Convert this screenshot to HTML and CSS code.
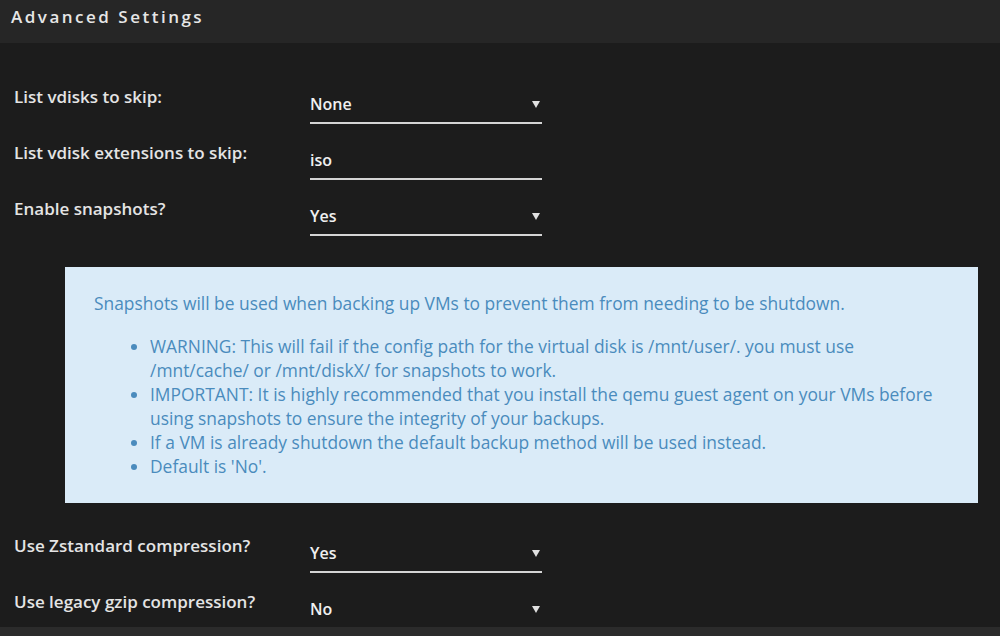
FILE: index.html
```html
<!DOCTYPE html>
<html lang="en">
<head>
    <meta charset="UTF-8">
    <meta name="viewport" content="width=device-width, initial-scale=1.0">
    <title>Advanced Settings</title>
    <link rel="stylesheet" href="styles.css">
</head>
<body>
    <div class="title-bar">Advanced Settings</div>

    <div class="settings">
        <div class="row">
            <div class="label">List vdisks to skip:</div>
            <div class="control select">
                <span>None</span>
                <svg class="caret" width="8" height="7" viewBox="0 0 8 7"><polygon points="0,0 8,0 4,7"/></svg>
            </div>
        </div>
        <div class="row">
            <div class="label">List vdisk extensions to skip:</div>
            <div class="control"><span>iso</span></div>
        </div>
        <div class="row">
            <div class="label">Enable snapshots?</div>
            <div class="control select">
                <span>Yes</span>
                <svg class="caret" width="8" height="7" viewBox="0 0 8 7"><polygon points="0,0 8,0 4,7"/></svg>
            </div>
        </div>

        <div class="info">
            <p>Snapshots will be used when backing up VMs to prevent them from needing to be shutdown.</p>
            <ul>
                <li>WARNING: This will fail if the config path for the virtual disk is /mnt/user/. you must use /mnt/cache/ or /mnt/diskX/ for snapshots to work.</li>
                <li>IMPORTANT: It is highly recommended that you install the qemu guest agent on your VMs before using snapshots to ensure the integrity of your backups.</li>
                <li>If a VM is already shutdown the default backup method will be used instead.</li>
                <li>Default is 'No'.</li>
            </ul>
        </div>

        <div class="row">
            <div class="label">Use Zstandard compression?</div>
            <div class="control select">
                <span>Yes</span>
                <svg class="caret" width="8" height="7" viewBox="0 0 8 7"><polygon points="0,0 8,0 4,7"/></svg>
            </div>
        </div>
        <div class="row last">
            <div class="label">Use legacy gzip compression?</div>
            <div class="control select">
                <span>No</span>
                <svg class="caret" width="8" height="7" viewBox="0 0 8 7"><polygon points="0,0 8,0 4,7"/></svg>
            </div>
        </div>
    </div>

    <div class="footer-bar"></div>
</body>
</html>
```

FILE: styles.css
```css
body {
    margin: 0;
    padding: 0;
    background-color: #1c1c1c;
    color: #e4e4e4;
    font-family: "Open Sans", "Noto Sans", sans-serif;
    font-size: 17px;
    overflow: hidden;
}
.title-bar {
    height: 43px;
    box-sizing: border-box;
    background-color: #262626;
    padding: 5px 11px 0;
    line-height: 24px;
    font-size: 17px;
    font-weight: 600;
    letter-spacing: 2.5px;
    color: #e6e6e6;
}
.settings {
    padding-top: 40px;
}
.row {
    display: flex;
    height: 56px;
    padding-left: 14px;
}
.row.last {
    height: 39px;
}
.label {
    width: 296px;
    line-height: 24px;
    font-weight: 600;
    padding-top: 2px;
}
.control {
    width: 232px;
    height: 41px;
    box-sizing: border-box;
    display: flex;
    align-items: flex-start;
    justify-content: space-between;
    padding-top: 9px;
    line-height: 24px;
    font-size: 16px;
    font-weight: 600;
    color: #f0f0f0;
    border-bottom: 2px solid #d4d4d4;
}
.row.last .control {
    border-bottom: none;
}
.caret {
    fill: #e0e0e0;
    margin: 9px 2px 0 0;
}
.info {
    margin: 16px 22px 29px 65px;
    height: 236px;
    box-sizing: border-box;
    padding: 24px 29px 0;
    background-color: #daebf8;
    color: #4a8bbd;
    font-size: 17.4px;
    line-height: 24px;
}
.info p {
    margin: 0 0 19px;
}
.info ul {
    margin: 0;
    padding-left: 56px;
}
.footer-bar {
    height: 20px;
    background-color: #2b2b2b;
}
```
